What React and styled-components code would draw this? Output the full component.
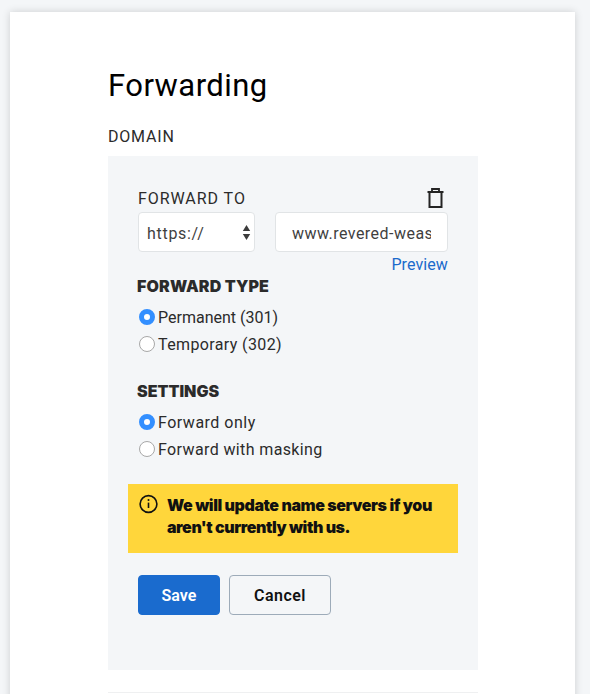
import React from 'react';
import styled, { createGlobalStyle } from 'styled-components';

const GlobalStyle = createGlobalStyle`
  * { box-sizing: border-box; }
  html, body { margin: 0; height: 100%; }
  body {
    overflow: hidden;
    background: #f4f6f8;
    color: #2b2b2b;
    font: 400 16px/22px Roboto, sans-serif;
  }
`;

const Page = styled.div`
  height: 694px;
  padding: 12px 15px 0 10px;
  overflow: hidden;
`;

const Card = styled.main`
  height: 720px;
  padding: 54px 97px 0 98px;
  background: #fff;
  box-shadow: 0 0 8px rgba(0, 0, 0, 0.16);
`;

const Title = styled.h1`
  margin: 0;
  color: #000;
  font-size: 31px;
  font-weight: 400;
  line-height: 40px;
  letter-spacing: 0.45px;
`;

const DomainLabel = styled.div`
  margin: 20px 0 8px;
  letter-spacing: 0.8px;
`;

const Panel = styled.section`
  height: 514px;
  padding: 31px 30px 0;
  background: #f4f6f8;
`;

const LabelRow = styled.div`
  display: flex;
  justify-content: space-between;
  height: 25px;
  line-height: 24px;
  letter-spacing: 0.95px;
`;

const IconButton = styled.button`
  display: flex;
  width: 18px;
  height: 22px;
  margin-right: 4px;
  padding: 0;
  border: 0;
  background: none;
`;

const Fields = styled.div`
  display: grid;
  grid-template-columns: 117px 173px;
  gap: 20px;
`;

const Box = styled.div`
  display: flex;
  align-items: center;
  height: 40px;
  border: 1px solid #e1e4e6;
  border-radius: 4px;
  background: #fff;
  color: #3f3f3f;
`;

const SelectBox = styled(Box)`
  justify-content: space-between;
  padding: 0 3px 0 8px;
  letter-spacing: 0.7px;
`;

const SelectText = styled.span`
  padding-top: 3px;
`;

const UrlBox = styled(Box)`
  padding: 3px 16px 0;
`;

const UrlInput = styled.input`
  width: 139px;
  height: 22px;
  padding: 0;
  border: 0;
  outline: 0;
  background: transparent;
  color: inherit;
  font: inherit;
  letter-spacing: 0.47px;
`;

const Preview = styled.a`
  display: block;
  padding-top: 2px;
  height: 23px;
  color: #1b6acb;
  text-align: right;
  letter-spacing: 0.1px;
`;

const GroupTitle = styled.h2`
  margin: ${(p) => p.$top}px 0 6px -1px;
  font: 900 16px/22px Inter, sans-serif;
  letter-spacing: ${(p) => p.$track}px;
`;

const Option = styled.label`
  display: flex;
  align-items: center;
  height: 27px;
  padding-left: 1px;
  gap: 3px;
  letter-spacing: ${(p) => p.$track}px;
`;

const OptionText = styled.span`
  padding-top: 2px;
`;

const Radio = styled.input`
  appearance: none;
  flex: none;
  width: 16px;
  height: 16px;
  margin: 0;
  border: 1px solid #a8a8a8;
  border-radius: 50%;
  background: #fff;

  &:checked {
    border: 5px solid #338fff;
  }
`;

const Alert = styled.div`
  display: flex;
  gap: 8px;
  height: 69px;
  margin: 22px -10px 22px;
  padding: 10px 11px;
  background: #ffd63b;
  color: #111;
  font: 900 16px/22px Inter, sans-serif;
`;

const AlertLine = styled.div`
  white-space: nowrap;
  letter-spacing: ${(p) => p.$track}px;
`;

const Actions = styled.div`
  display: flex;
  gap: 9px;
`;

const Button = styled.button`
  width: ${(p) => (p.$primary ? 82 : 102)}px;
  height: 40px;
  padding: 1px 0 0;
  border: 1px solid ${(p) => (p.$primary ? '#1a6bce' : '#9dabb9')};
  border-radius: 4px;
  background: ${(p) => (p.$primary ? '#1a6bce' : 'transparent')};
  color: ${(p) => (p.$primary ? '#fff' : '#111')};
  font: 600 16px/22px Roboto, sans-serif;
  letter-spacing: ${(p) => (p.$primary ? 0.1 : 0.45)}px;
`;

const Divider = styled.hr`
  height: 1px;
  margin: 22px 0 0;
  border: 0;
  background: #eff0f1;
`;

const TrashIcon = () => (
  <svg width="18" height="22" viewBox="0 0 18 22" fill="none" stroke="#242424">
    <path d="M1.5 5H17.5" strokeWidth="2" />
    <path d="M6 4.5V2H13V4.5" strokeWidth="1.8" />
    <path d="M3.5 5V20H15.5V5" strokeWidth="2" />
  </svg>
);

const SortIcon = () => (
  <svg width="9" height="15" viewBox="0 0 9 15" fill="#3c3c3c">
    <path d="M4.5 0L8.2 6H.8ZM.8 9H8.2L4.5 15Z" />
  </svg>
);

const InfoIcon = () => (
  <svg width="20" height="20" viewBox="0 0 20 20" fill="none" stroke="#111">
    <circle cx="9.5" cy="10" r="8.4" strokeWidth="1.6" />
    <path d="M9.5 8.6V14" strokeWidth="1.6" />
    <circle cx="9.5" cy="6" r="1" fill="#111" stroke="none" />
  </svg>
);

const Choice = ({ name, track, checked, children }) => (
  <Option $track={track}>
    <Radio type="radio" name={name} defaultChecked={checked} />
    <OptionText>{children}</OptionText>
  </Option>
);

export default function App() {
  return (
    <Page>
      <GlobalStyle />
      <Card>
        <Title>Forwarding</Title>
        <DomainLabel>DOMAIN</DomainLabel>
        <Panel>
          <LabelRow>
            FORWARD TO
            <IconButton aria-label="Delete"><TrashIcon /></IconButton>
          </LabelRow>
          <Fields>
            <SelectBox><SelectText>https://</SelectText><SortIcon /></SelectBox>
            <UrlBox><UrlInput defaultValue="www.revered-weas" /></UrlBox>
          </Fields>
          <Preview>Preview</Preview>
          <GroupTitle $top={0} $track={0.15}>FORWARD TYPE</GroupTitle>
          <Choice name="type" track={0} checked>Permanent (301)</Choice>
          <Choice name="type" track={0.38}>Temporary (302)</Choice>
          <GroupTitle $top={23} $track={0}>SETTINGS</GroupTitle>
          <Choice name="mode" track={0.5} checked>Forward only</Choice>
          <Choice name="mode" track={0.38}>Forward with masking</Choice>
          <Alert>
            <InfoIcon />
            <div>
              <AlertLine $track={-0.41}>We will update name servers if you</AlertLine>
              <AlertLine $track={-0.43}>aren't currently with us.</AlertLine>
            </div>
          </Alert>
          <Actions>
            <Button $primary>Save</Button>
            <Button>Cancel</Button>
          </Actions>
        </Panel>
        <Divider />
      </Card>
    </Page>
  );
}
